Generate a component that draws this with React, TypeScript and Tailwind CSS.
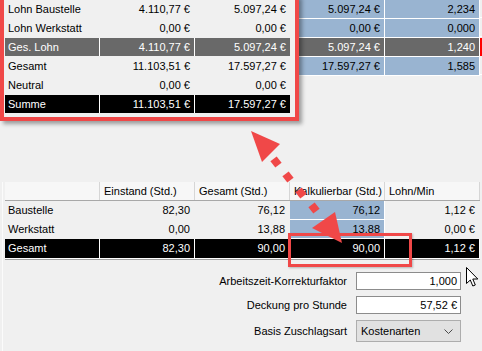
import React from "react";

const font = { fontFamily: '"Liberation Sans", Arial, sans-serif' };

type Cell = { t: string; right?: boolean };

function BgRow({ cells, kind }: { cells: string[]; kind: "blue" | "gray" }) {
  const bg = kind === "gray" ? "bg-[#696969] text-white" : "bg-[#99b4d1] text-black";
  return (
    <div className="flex h-[19px] pl-[5px]">
      <div className="w-[95px] shrink-0" />
      <div className="w-[95px] shrink-0" />
      <div className="w-[95px] shrink-0" />
      {cells.map((c, i) => (
        <div
          key={i}
          className={`w-[95px] shrink-0 h-[19px] flex items-center justify-end pr-[4px] border-r border-b border-white ${bg}`}
        >
          {c}
        </div>
      ))}
      {kind === "gray" ? <div className="w-[3px] h-[18px] bg-[#ff0000]" /> : <div className="w-[3px] h-[18px] border-b border-white" />}
    </div>
  );
}

function InsetRow({ label, a, b, kind }: { label: string; a: string; b: string; kind: "light" | "gray" | "black" }) {
  const bg =
    kind === "gray" ? "bg-[#696969] text-white" : kind === "black" ? "bg-black text-white" : "text-black";
  const sep = kind === "light" ? "border-transparent" : "border-white";
  return (
    <div className={`flex h-[19px] ${kind === "light" ? "" : ""}`}>
      <div className={`w-[95px] h-[18px] flex items-center pl-[3px] border-r ${sep} ${bg}`}>{label}</div>
      <div className={`w-[95px] h-[18px] flex items-center justify-end pr-[4px] border-r ${sep} ${bg}`}>{a}</div>
      <div className={`w-[95px] h-[18px] flex items-center justify-end pr-[4px] ${bg}`}>{b}</div>
    </div>
  );
}

function BodyRow({
  cells,
  dark,
  blueIdx,
}: {
  cells: string[];
  dark?: boolean;
  blueIdx?: number;
}) {
  return (
    <div className="flex h-[19px]">
      {cells.map((c, i) => {
        const isBlue = !dark && i === blueIdx;
        const base = dark
          ? "bg-black text-white border-white"
          : isBlue
          ? "bg-[#99b4d1] text-black border-white border-b"
          : "text-black border-transparent";
        return (
          <div
            key={i}
            className={`w-[95px] shrink-0 h-[19px] flex items-center border-r ${base} ${
              i === 0 ? "justify-start pl-[3px]" : "justify-end pr-[4px]"
            }`}
          >
            {c}
          </div>
        );
      })}
    </div>
  );
}

export default function App() {
  const diamonds = [
    [276, 162],
    [288, 177],
    [301, 193],
    [314, 208],
  ];
  return (
    <div
      className="relative w-[482px] h-[351px] overflow-hidden bg-[#f0f0f0] text-[11px] leading-none text-black"
      style={font}
    >
      {/* background table (top) */}
      <div className="flex flex-col">
        <BgRow cells={["5.097,24 €", "2,234"]} kind="blue" />
        <BgRow cells={["0,00 €", "0,000"]} kind="blue" />
        <BgRow cells={["5.097,24 €", "1,240"]} kind="gray" />
        <BgRow cells={["17.597,27 €", "1,585"]} kind="blue" />
      </div>

      {/* bottom grid */}
      <div className="mt-[106px] ml-[2px] border-l border-[#fbfbfb] pl-[2px] pb-[100px]">
        <div className="flex h-[19px] bg-[#f7f7f7] border-b border-[#a8a8a8] w-[475px]">
          {["", "Einstand (Std.)", "Gesamt (Std.)", "Kalkulierbar (Std.)", "Lohn/Min"].map((h, i) => (
            <div
              key={i}
              className="w-[95px] shrink-0 h-[18px] flex items-center pl-[4px] border-r border-[#d6d6d6] whitespace-nowrap"
            >
              {h}
            </div>
          ))}
        </div>
        <BodyRow cells={["Baustelle", "82,30", "76,12", "76,12", "1,12 €"]} blueIdx={3} />
        <BodyRow cells={["Werkstatt", "0,00", "13,88", "13,88", "0,00 €"]} blueIdx={3} />
        <BodyRow cells={["Gesamt", "82,30", "90,00", "90,00", "1,12 €"]} dark />
        <div className="w-[475px] h-[2px] border-t border-white border-b border-b-[#a0a0a0]" />

        {/* form */}
        <div className="mt-[12px] flex flex-col gap-[6px]">
          <div className="flex items-center h-[18px]">
            <div className="w-[342px] text-right">Arbeitszeit-Korrekturfaktor</div>
            <div className="ml-[9px] w-[105px] h-[18px] bg-white border border-[#8c8c8c] flex items-center justify-end pr-[3px]">
              1,000
            </div>
          </div>
          <div className="flex items-center h-[18px]">
            <div className="w-[342px] text-right">Deckung pro Stunde</div>
            <div className="ml-[9px] w-[105px] h-[18px] bg-white border border-[#8c8c8c] flex items-center justify-end pr-[3px]">
              57,52 €
            </div>
          </div>
          <div className="flex items-center h-[22px]">
            <div className="w-[342px] text-right">Basis Zuschlagsart</div>
            <div className="ml-[9px] w-[105px] h-[22px] bg-[#e1e1e1] border border-[#adadad] flex items-center justify-between pl-[4px] pr-[7px]">
              <span>Kostenarten</span>
              <svg width="9" height="5" viewBox="0 0 9 5">
                <polyline points="0.5,0.5 4.5,4.5 8.5,0.5" fill="none" stroke="#4a4a4a" strokeWidth="1" />
              </svg>
            </div>
          </div>
        </div>
      </div>

      {/* magnified inset */}
      <div
        className="absolute left-0 top-[-5px] w-[299px] h-[126px] border-[4px] border-[#f04848] bg-[#f0f0f0] pt-[1px] pl-[1px] shadow-[3px_3px_4px_rgba(0,0,0,0.35)]"
      >
        <InsetRow label="Lohn Baustelle" a="4.110,77 €" b="5.097,24 €" kind="light" />
        <InsetRow label="Lohn Werkstatt" a="0,00 €" b="0,00 €" kind="light" />
        <InsetRow label="Ges. Lohn" a="4.110,77 €" b="5.097,24 €" kind="gray" />
        <InsetRow label="Gesamt" a="11.103,51 €" b="17.597,27 €" kind="light" />
        <InsetRow label="Neutral" a="0,00 €" b="0,00 €" kind="light" />
        <InsetRow label="Summe" a="11.103,51 €" b="17.597,27 €" kind="black" />
      </div>

      {/* highlight rectangle */}
      <div className="absolute left-[288px] top-[233px] w-[124px] h-[34px] border-[3px] border-[#f04848] shadow-[1px_1px_2px_rgba(0,0,0,0.25)]" />

      {/* dashed double arrow */}
      <svg className="absolute left-0 top-0 pointer-events-none" width="482" height="351">
        <polygon points="251,131 280,144 262,162" fill="#f04848" />
        <polygon points="342,243 312,228 335,212" fill="#f04848" />
        {diamonds.map(([x, y], i) => (
          <rect
            key={i}
            x={x - 4}
            y={y - 4}
            width="8"
            height="8"
            fill="#f04848"
            transform={`rotate(52 ${x} ${y})`}
          />
        ))}
      </svg>

      {/* mouse cursor */}
      <svg className="absolute left-[466px] top-[267px] pointer-events-none" width="13" height="21" viewBox="0 0 13 21">
        <path
          d="M0.5 0.5 L0.5 16.5 L4.3 13 L6.8 19 L9.3 18 L6.8 12 L11.8 12 Z"
          fill="#ffffff"
          stroke="#000000"
          strokeWidth="1"
          strokeLinejoin="round"
        />
      </svg>
    </div>
  );
}
